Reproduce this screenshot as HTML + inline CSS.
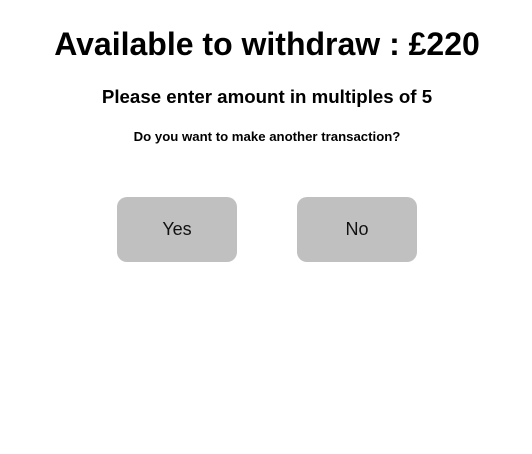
<!DOCTYPE html>
<html><head><meta charset="utf-8"><style>
body{margin:0;width:532px;height:454px;background:#fff;font-family:"Liberation Sans",Arial,sans-serif;color:#000;position:relative;overflow:hidden}
.t{position:absolute;left:0;width:534px;text-align:center;font-weight:bold;white-space:nowrap}
.b{position:absolute;top:197px;width:120px;height:65px;background:#c0c0c0;border-radius:10px;font-size:18px;line-height:65px;text-align:center;color:#111}
</style></head><body>
<div class="t" style="top:25px;font-size:32px;line-height:38px">Available to withdraw : £220</div>
<div class="t" style="top:86px;font-size:18.7px;line-height:22px">Please enter amount in multiples of 5</div>
<div class="t" style="top:129px;font-size:13.2px;line-height:16px">Do you want to make another transaction?</div>
<div class="b" style="left:117px">Yes</div>
<div class="b" style="left:297px">No</div>
</body></html>
